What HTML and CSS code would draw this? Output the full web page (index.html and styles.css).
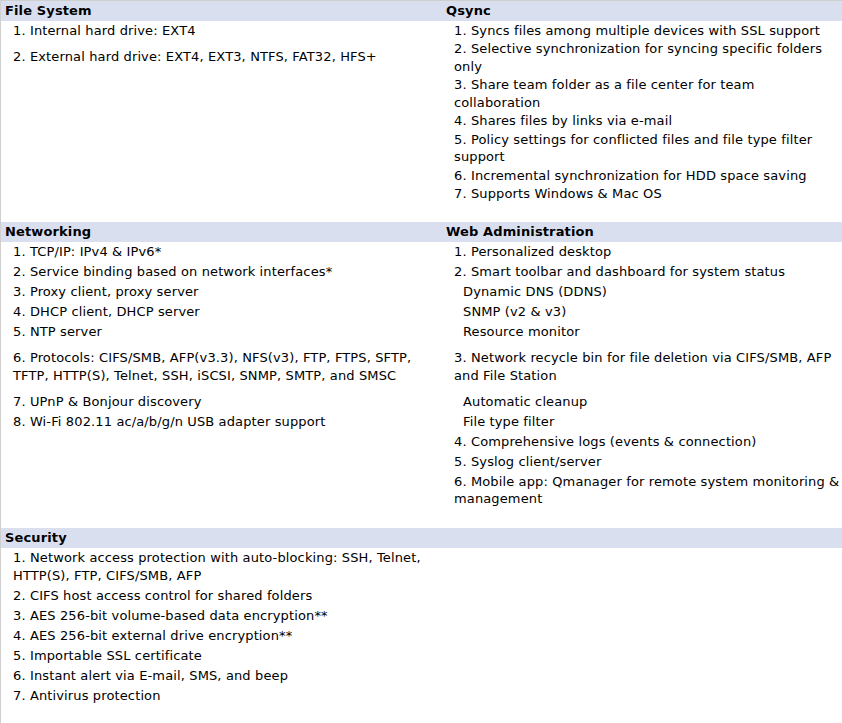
FILE: index.html
```html
<!DOCTYPE html>
<html lang="en">
<head>
    <meta charset="UTF-8">
    <title>Specifications - Software</title>
    <link rel="stylesheet" href="styles.css">
</head>
<body>
    <div class="spec-table">
        <!-- row 1 -->
        <div class="spec-head">File System</div>
        <div class="spec-head">Qsync</div>
        <div class="spec-cell">
            <div class="item">1. Internal hard drive: EXT4</div>
            <div class="item gap">2. External hard drive: EXT4, EXT3, NTFS, FAT32, HFS+</div>
        </div>
        <div class="spec-cell tight">
            <div class="item">1. Syncs files among multiple devices with SSL support</div>
            <div class="item">2. Selective synchronization for syncing specific folders only</div>
            <div class="item">3. Share team folder as a file center for team collaboration</div>
            <div class="item">4. Shares files by links via e-mail</div>
            <div class="item">5. Policy settings for conflicted files and file type filter support</div>
            <div class="item">6. Incremental synchronization for HDD space saving</div>
            <div class="item">7. Supports Windows &amp; Mac OS</div>
        </div>

        <!-- row 2 -->
        <div class="spec-head">Networking</div>
        <div class="spec-head">Web Administration</div>
        <div class="spec-cell">
            <div class="item">1. TCP/IP: IPv4 &amp; IPv6*</div>
            <div class="item">2. Service binding based on network interfaces*</div>
            <div class="item">3. Proxy client, proxy server</div>
            <div class="item">4. DHCP client, DHCP server</div>
            <div class="item">5. NTP server</div>
            <div class="item gap">6. Protocols: CIFS/SMB, AFP(v3.3), NFS(v3), FTP, FTPS, SFTP, TFTP, HTTP(S), Telnet, SSH, iSCSI, SNMP, SMTP, and SMSC</div>
            <div class="item gap">7. UPnP &amp; Bonjour discovery</div>
            <div class="item">8. Wi-Fi 802.11 ac/a/b/g/n USB adapter support</div>
        </div>
        <div class="spec-cell">
            <div class="item">1. Personalized desktop</div>
            <div class="item">2. Smart toolbar and dashboard for system status</div>
            <div class="item sub">Dynamic DNS (DDNS)</div>
            <div class="item sub">SNMP (v2 &amp; v3)</div>
            <div class="item sub">Resource monitor</div>
            <div class="item gap">3. Network recycle bin for file deletion via CIFS/SMB, AFP and File Station</div>
            <div class="item sub gap">Automatic cleanup</div>
            <div class="item sub">File type filter</div>
            <div class="item">4. Comprehensive logs (events &amp; connection)</div>
            <div class="item">5. Syslog client/server</div>
            <div class="item">6. Mobile app: Qmanager for remote system monitoring &amp; management</div>
        </div>

        <!-- row 3 -->
        <div class="spec-head">Security</div>
        <div class="spec-head"></div>
        <div class="spec-cell">
            <div class="item">1. Network access protection with auto-blocking: SSH, Telnet, HTTP(S), FTP, CIFS/SMB, AFP</div>
            <div class="item">2. CIFS host access control for shared folders</div>
            <div class="item">3. AES 256-bit volume-based data encryption**</div>
            <div class="item">4. AES 256-bit external drive encryption**</div>
            <div class="item">5. Importable SSL certificate</div>
            <div class="item">6. Instant alert via E-mail, SMS, and beep</div>
            <div class="item">7. Antivirus protection</div>
        </div>
        <div class="spec-cell"></div>
    </div>
</body>
</html>
```

FILE: styles.css
```css
* {
    margin: 0;
    padding: 0;
    box-sizing: border-box;
}

body {
    font-family: "DejaVu Sans", Verdana, sans-serif;
    font-size: 13px;
    letter-spacing: 0.13px;
    color: #000;
    background: #fff;
    min-height: 723px;
}

.spec-table {
    display: grid;
    grid-template-columns: 441px 1fr;
    border-top: 1px solid #cfcfcf;
    border-left: 1px solid #cfcfcf;
    min-height: 723px;
    align-content: start;
}

.spec-head {
    background: #dadff0;
    font-weight: bold;
    height: 20px;
    line-height: 20px;
    padding-left: 4px;
}

.spec-cell {
    padding: 0 0 19px 4px;
}

.item {
    line-height: 17.5px;
    padding: 1.25px 0 1.25px 8px;
}

.tight .item {
    padding-top: 0.5px;
    padding-bottom: 0.5px;
}

.item.gap {
    margin-top: 6px;
}

.item.sub {
    padding-left: 17px;
}
```
